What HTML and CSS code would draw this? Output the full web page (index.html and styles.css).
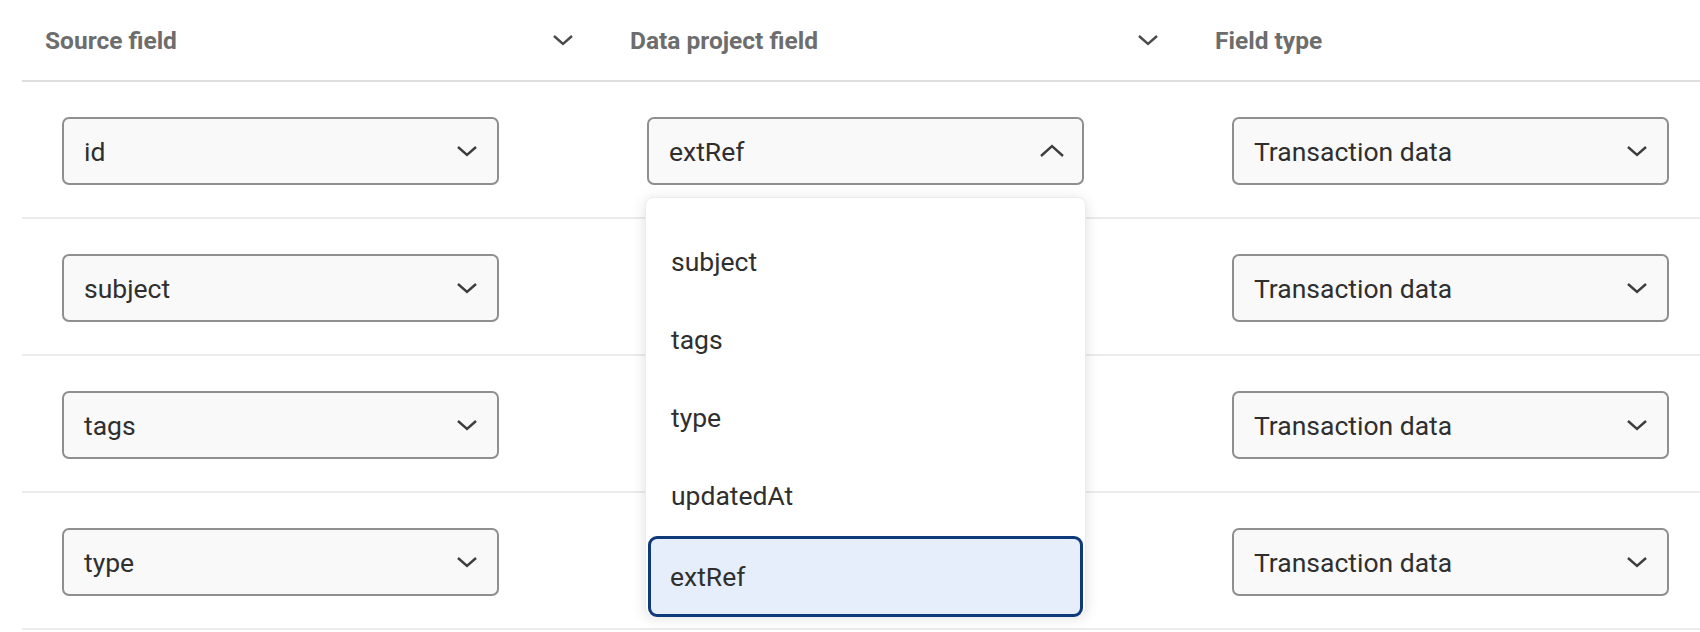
FILE: index.html
```html
<!DOCTYPE html>
<html lang="en">
<head>
  <meta charset="UTF-8" />
  <title>Field Mapping</title>
  <link rel="stylesheet" href="styles.css">
</head>
<body>

  <div class="mapping">

    <!-- header -->
    <div class="row head">
      <div class="cell">
        <span>Source field</span>
        <svg class="chev" width="22" height="12" viewBox="0 0 22 12"><polyline points="2,2 11,10 20,2" /></svg>
      </div>
      <div class="cell">
        <span>Data project field</span>
        <svg class="chev" width="22" height="12" viewBox="0 0 22 12"><polyline points="2,2 11,10 20,2" /></svg>
      </div>
      <div class="cell">
        <span>Field type</span>
      </div>
    </div>

    <div class="row">
      <div class="cell">
        <div class="select">id <svg class="chev" width="22" height="12" viewBox="0 0 22 12"><polyline points="2,2 11,10 20,2" /></svg></div>
      </div>
      <div class="cell open-cell">
        <div class="select">extRef <svg class="chev up" width="26" height="14" viewBox="0 0 26 14"><polyline points="2,12 13,2 24,12" /></svg></div>
        <ul class="menu">
          <li>subject</li>
          <li>tags</li>
          <li>type</li>
          <li>updatedAt</li>
          <li class="active">extRef</li>
        </ul>
      </div>
      <div class="cell">
        <div class="select">Transaction data <svg class="chev" width="22" height="12" viewBox="0 0 22 12"><polyline points="2,2 11,10 20,2" /></svg></div>
      </div>
    </div>

    <!-- data project selects in these rows sit under the open menu -->
    <div class="row">
      <div class="cell">
        <div class="select">subject <svg class="chev" width="22" height="12" viewBox="0 0 22 12"><polyline points="2,2 11,10 20,2" /></svg></div>
      </div>
      <div class="cell"></div>
      <div class="cell">
        <div class="select">Transaction data <svg class="chev" width="22" height="12" viewBox="0 0 22 12"><polyline points="2,2 11,10 20,2" /></svg></div>
      </div>
    </div>

    <div class="row">
      <div class="cell">
        <div class="select">tags <svg class="chev" width="22" height="12" viewBox="0 0 22 12"><polyline points="2,2 11,10 20,2" /></svg></div>
      </div>
      <div class="cell"></div>
      <div class="cell">
        <div class="select">Transaction data <svg class="chev" width="22" height="12" viewBox="0 0 22 12"><polyline points="2,2 11,10 20,2" /></svg></div>
      </div>
    </div>

    <div class="row">
      <div class="cell">
        <div class="select">type <svg class="chev" width="22" height="12" viewBox="0 0 22 12"><polyline points="2,2 11,10 20,2" /></svg></div>
      </div>
      <div class="cell"></div>
      <div class="cell">
        <div class="select">Transaction data <svg class="chev" width="22" height="12" viewBox="0 0 22 12"><polyline points="2,2 11,10 20,2" /></svg></div>
      </div>
    </div>

  </div>

</body>
</html>
```

FILE: styles.css
```css
body {
  margin: 0;
  font-family: Roboto, "Liberation Sans", sans-serif;
  background-color: #fff;
  color: #2f2f2f;
  overflow: hidden;
}
.mapping {
  margin-left: 22px;
}
.row {
  display: grid;
  grid-template-columns: 585px 585px 1fr;
  height: 135px;
  border-bottom: 2px solid #ebebeb;
}
.head {
  height: 80px;
  border-bottom: 2px solid #dedede;
}
.cell {
  display: flex;
  align-items: center;
}
.row .cell {
  padding-left: 40px;
  padding-top: 3px;
}
.head .cell {
  justify-content: space-between;
  padding: 0 33px 0 23px;
  font-size: 24.5px;
  font-weight: bold;
  color: #6d6d6d;
}
.head .chev polyline {
  stroke: #4a4a4a;
}
.select {
  box-sizing: border-box;
  width: 437px;
  height: 68px;
  display: flex;
  align-items: center;
  justify-content: space-between;
  padding: 0 19px 0 20px;
  border: 2px solid #8f8f8f;
  border-radius: 7px;
  background-color: #f9f9f9;
  font-size: 26.5px;
  color: #2f2f2f;
}
.chev polyline {
  fill: none;
  stroke: #3d3d3d;
  stroke-width: 2.4;
}
.select .up {
  margin-right: -2px;
}
.open-cell {
  position: relative;
}
.menu {
  position: absolute;
  top: 115px;
  left: 38px;
  z-index: 2;
  box-sizing: border-box;
  width: 441px;
  height: 419px;
  margin: 0;
  padding: 24px 2px 2px;
  list-style: none;
  background-color: #fff;
  border: 1px solid #ececec;
  border-radius: 8px;
  box-shadow: 0 2px 14px rgba(0, 0, 0, 0.12);
}
.menu li {
  box-sizing: border-box;
  height: 78px;
  display: flex;
  align-items: center;
  padding-left: 23px;
  font-size: 26.5px;
  color: #2f2f2f;
}
.menu .active {
  height: 81px;
  margin-top: 2px;
  border: 3.5px solid #0f3a7a;
  border-radius: 9px;
  background-color: #e5eefa;
  padding-left: 19px;
}
```
